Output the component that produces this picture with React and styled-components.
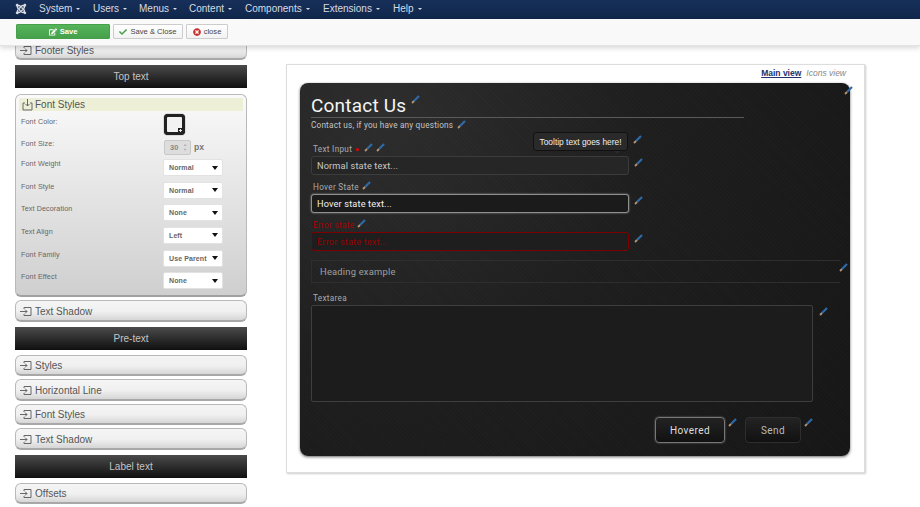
import React from "react";
import styled, { createGlobalStyle } from "styled-components";
import { FaJoomla, FaCheck, FaTimesCircle, FaEdit } from "react-icons/fa";

const Global = createGlobalStyle`
  html, body { margin: 0; padding: 0; background: #fff; }
  body { width: 920px; height: 507px; overflow: hidden; font-family: "Liberation Sans", Arial, sans-serif; }
  * { box-sizing: border-box; }
`;
const Page = styled.div`width: 920px; height: 507px; overflow: hidden; display: flex; flex-direction: column;`;
const Nav = styled.nav`
  height: 19px; flex: none; display: flex; align-items: center; padding: 0 0 2px 15px;
  background: linear-gradient(#17305a, #10274b); color: #d6dbe4; font-size: 10px;
`;
const Logo = styled(FaJoomla)`width: 12px; height: 12px; color: #d8dce2; margin-right: 12px;`;
const NavItem = styled.span`
  width: ${p => p.$w}px; white-space: nowrap;
  &::after { content: ""; display: inline-block; margin-left: 4px; vertical-align: 2px;
    border: 2px solid transparent; border-top-color: #d6dbe4; border-bottom: 0; }
`;
const Toolbar = styled.div`
  height: 27px; flex: none; display: flex; align-items: center; gap: 3px; padding: 0 0 1px 16px;
  background: #f9f9f9; border-bottom: 1px solid #e4e4e4; box-shadow: 0 2px 5px rgba(0,0,0,.16);
  position: relative; z-index: 2;
`;
const Btn = styled.button`
  height: 15px; width: ${p => p.$w}px; padding: 0; display: flex; align-items: center; justify-content: center; gap: 3px;
  font: 7.6px "Liberation Sans", sans-serif; color: ${p => p.$green ? "#fff" : "#444"};
  font-weight: ${p => p.$green ? 700 : 400};
  background: ${p => p.$green ? "linear-gradient(#56b45a,#46a04b)" : "linear-gradient(#fff,#f2f2f2)"};
  border: 1px solid ${p => p.$green ? "#46a04b" : "#ccc"}; border-radius: 1px;
  svg { width: 8px; height: 8px; }
`;
const Main = styled.div`flex: 1; display: flex; padding-left: 15px; gap: 39px; min-height: 0;`;
const Side = styled.aside`width: 232px; flex: none; height: 461px; overflow: hidden; display: flex; flex-direction: column;`;
const Fold = styled.div`
  flex: none; height: ${p => p.$h || 21.5}px; margin-top: ${p => p.$mt ?? 3}px; padding: 2px 0 0 4px;
  display: flex; align-items: center; gap: 3px; font-size: 10px; color: #555;
  border: 1px solid #b9b9b9; border-bottom: 2px solid #a8a8a8; border-radius: 6px;
  background: linear-gradient(#f5f5f5, #f0f0f0 55%, #d6d6d6);
`;
const Bar = styled.div`
  flex: none; height: 23px; margin-top: ${p => p.$mt ?? 5}px; display: flex; align-items: center; justify-content: center;
  font-size: 10px; color: #c4c4c4; background: linear-gradient(#4a4a4a, #101010);
`;
const Open = styled.section`
  flex: none; height: 203px; margin-top: 6px; padding: 3px 3px 0; border: 1px solid #b9b9b9; border-bottom: 2px solid #a0a0a0;
  border-radius: 6px; background: linear-gradient(#fafafa, #cfcfcf);
`;
const OpenHead = styled.div`
  height: 13px; display: flex; align-items: center; gap: 2px; padding-left: 3px; font-size: 10px; color: #555; background: #edf0d6;
`;
const Props = styled.div`
  display: grid; grid-template-columns: 142px 1fr; grid-auto-rows: 22.6px; padding: 3px 0 0 2px;
  font-size: 7.2px; color: #666; letter-spacing: .1px;
`;
const PropLabel = styled.div`padding-top: ${p => p.$pt ?? 2}px;`;
const PropValue = styled.div`display: flex; align-items: flex-start;`;
const Swatch = styled.div`
  width: 21px; height: 21px; margin-left: 1px; border-radius: 4px; border: 3px solid #222; background: #f2f2f2; position: relative; box-shadow: 0 0 1px #000;
  &::after { content: ""; position: absolute; right: -1px; bottom: -1px; width: 5px; height: 5px; background: radial-gradient(circle, #eee 1px, #222 1.4px); }
`;
const Spin = styled.div`
  width: 27px; height: 15px; margin: 3px 0 0 1px; border: 1px solid #c8c8c8; border-radius: 2px; background: #ddd; color: #888;
  display: flex; align-items: center; justify-content: space-between; padding: 0 2px 0 5px; font-size: 7.4px; font-weight: 700;
`;
const Arrows = styled.span`color: #aab; font-size: 4px; line-height: 5px; width: 6px; text-align: center;`;
const Unit = styled.span`font-size: 8.6px; font-weight: 700; color: #777; margin: 5px 0 0 3px;`;
const Sel = styled.div`
  width: 60px; height: 17px; padding: 0 4px 0 5px; background: #fff; border-radius: 2px; color: #666; border: 1px solid #e2e2e2;
  display: flex; align-items: center; justify-content: space-between; font-size: 7px; font-weight: 700; white-space: nowrap; overflow: hidden;
  &::after { content: ""; margin-left: 1px; flex: none; border: 3px solid transparent; border-top: 4px solid #111; border-bottom: 0; }
`;
const Frame = styled.div`
  width: 579px; height: 409px; margin-top: 18px; padding: 0 14px 0 13px; background: #fff; border: 1px solid #ddd; box-shadow: 1px 1px 2px #ccc;
  display: flex; flex-direction: column;
`;
const Views = styled.div`height: 18px; flex: none; display: flex; justify-content: flex-end; align-items: flex-start; gap: 5px; padding: 3px 4px 0 0; font-size: 8.5px;`;
const ViewOn = styled.a`font-weight: 700; color: #23316e; text-decoration: underline;`;
const ViewOff = styled.a`font-style: italic; color: #888;`;
const Dark = styled.div`
  position: relative; height: 373px; width: 550px; padding: 0 10px 0 11px; border-radius: 8px; color: #bbb;
  font-family: Roboto, sans-serif; box-shadow: 0 1px 3px rgba(0,0,0,.6);
  background:
    repeating-linear-gradient(45deg, rgba(255,255,255,.012) 0 1px, transparent 1px 3px),
    radial-gradient(circle at 15% 8%, #2d2d2d, #1e1e1e 45%, #161616 100%);
`;
const TitleRow = styled.div`height: 35px; display: flex; align-items: flex-start; border-bottom: 1px solid #5a5a5a; width: 433px; padding-top: 10px;`;
const Title = styled.h1`margin: 0; font: 400 19px/26px Roboto, sans-serif; letter-spacing: .2px; color: #f4f4f4;`;
const SubRow = styled.div`height: 14px; display: flex; align-items: center; gap: 4px; font-size: 8.2px; letter-spacing: .2px; color: #c4c4c4;`;
const Label = styled.div`
  height: ${p => p.$h}px; padding: 0 0 1.5px 2px; display: flex; align-items: flex-end; gap: 3px; font-size: 8.2px; line-height: 11px; letter-spacing: .3px;
  color: ${p => p.$err ? "#a80000" : "#aaa"};
`;
const Req = styled.span`width: 3px; height: 3px; border-radius: 50%; background: #e00; margin: 0 1px 4px;`;
const InputRow = styled.div`display: flex; align-items: flex-start; gap: 4px; position: relative;`;
const Input = styled.div`
  width: 318px; height: 19px; padding-left: 5px; display: flex; align-items: center; border-radius: 3px; font-size: 9.2px; letter-spacing: .15px;
  background: ${p => p.$state === "hover" ? "#1b1b1b" : p.$state === "error" ? "#1e1e1e" : "#262626"};
  color: ${p => p.$state === "error" ? "#990000" : p.$state === "hover" ? "#f2f2f2" : "#c8c8c8"};
  border: 1px solid ${p => p.$state === "hover" ? "#8f8f8f" : p.$state === "error" ? "#7c0000" : "#3c3c3c"};
  box-shadow: ${p => p.$state === "hover" ? "0 0 2px #999" : "none"};
`;
const Tip = styled.div`
  position: absolute; left: 222px; top: -24px; width: 95px; height: 19px; display: flex; align-items: center; justify-content: center;
  font: 8.4px "Liberation Sans", sans-serif; color: #eee; background: #2a2a2a; border: 1px solid #111; border-radius: 3px; white-space: nowrap;
  &::after { content: ""; position: absolute; left: 80px; bottom: -4px; border: 3px solid transparent; border-top-color: #2a2a2a; border-bottom: 0; }
`;
const TipPen = styled.div`position: absolute; left: 322px; top: -27px;`;
const Heading = styled.div`
  width: 529px; height: 22.5px; margin-top: 9px; padding-left: 8px; display: flex; align-items: center; font-size: 9.4px; letter-spacing: .2px; color: #a0a0a0;
  border: 1px solid #2e2e2e; border-right: 0; position: relative;
`;
const HeadPen = styled.div`position: absolute; right: -8px; top: 2px;`;
const TextRow = styled.div`display: flex; gap: 6px; align-items: flex-start;`;
const TextArea = styled.div`width: 502px; height: 97px; border: 1px solid #3e3e3e; border-radius: 2px; background: #1c1c1c;`;
const Actions = styled.div`display: flex; justify-content: flex-end; align-items: flex-start; padding: 15px 27px 0 0;`;
const Action = styled.button`
  width: ${p => p.$w}px; height: 26px; margin-left: ${p => p.$ml}px; padding: 0; border-radius: 4px; font: 10px Roboto, sans-serif; letter-spacing: .4px;
  color: ${p => p.$hover ? "#ddd" : "#bbb"}; background: linear-gradient(#232323, #111);
  border: 1px solid ${p => p.$hover ? "#777" : "#2e2e2e"}; box-shadow: ${p => p.$hover ? "0 0 2px #777" : "none"};
`;
const CornerPen = styled.div`position: absolute; right: -3px; top: -3px;`;
const PenWrap = styled.span`display: inline-flex; flex: none; margin-top: ${p => p.$mt || 0}px; margin-left: ${p => p.$ml || 0}px; margin-bottom: ${p => p.$mb || 0}px;`;

const Pen = ({ mt, ml, mb }) => (
  <PenWrap $mt={mt} $ml={ml} $mb={mb}>
    <svg width="9" height="9" viewBox="0 0 9 9">
      <path d="M3 6 L8 1" stroke="#2f6aa8" strokeWidth="2.2" />
      <path d="M1 8 L3 6" stroke="#b99575" strokeWidth="1.8" />
    </svg>
  </PenWrap>
);
const InIcon = () => (
  <svg width="12" height="11" viewBox="0 0 12 11" fill="none" stroke="#666" strokeWidth="1">
    <path d="M4 3V1.5h7v8H4V8" /><path d="M0 5.5h7M5 3.5l2 2-2 2" />
  </svg>
);
const DownIcon = () => (
  <svg width="11" height="12" viewBox="0 0 11 12" fill="none" stroke="#666" strokeWidth="1">
    <path d="M3 4H1v7h9V4H8" /><path d="M5.5 0v7M3.5 5l2 2 2-2" />
  </svg>
);

const navItems = [["System", 54], ["Users", 46], ["Menus", 50], ["Content", 56], ["Components", 78], ["Extensions", 70], ["Help", 40]];
const selects = [["Font Weight", "Normal"], ["Font Style", "Normal"], ["Text Decoration", "None"], ["Text Align", "Left"], ["Font Family", "Use Parent"], ["Font Effect", "None"]];

export default function App() {
  return (
    <Page>
      <Global />
      <Nav>
        <Logo />
        {navItems.map(([t, w]) => <NavItem key={t} $w={w}>{t}</NavItem>)}
      </Nav>
      <Toolbar>
        <Btn $green $w={94}><FaEdit />Save</Btn>
        <Btn $w={70}><FaCheck color="#46a04b" />Save &amp; Close</Btn>
        <Btn $w={42}><FaTimesCircle color="#c9302c" />close</Btn>
      </Toolbar>
      <Main>
        <Side>
          <Fold $mt={-7} $h={21}><InIcon />Footer Styles</Fold>
          <Bar>Top text</Bar>
          <Open>
            <OpenHead><DownIcon />Font Styles</OpenHead>
            <Props>
              <PropLabel $pt={3}>Font Color:</PropLabel>
              <PropValue><Swatch /></PropValue>
              <PropLabel>Font Size:</PropLabel>
              <PropValue><Spin>30<Arrows>▲<br />▼</Arrows></Spin><Unit>px</Unit></PropValue>
              {selects.map(([l, v]) => (
                <React.Fragment key={l}>
                  <PropLabel $pt={0}>{l}</PropLabel>
                  <PropValue><Sel>{v}</Sel></PropValue>
                </React.Fragment>
              ))}
            </Props>
          </Open>
          <Fold><InIcon />Text Shadow</Fold>
          <Bar>Pre-text</Bar>
          <Fold $mt={5}><InIcon />Styles</Fold>
          <Fold><InIcon />Horizontal Line</Fold>
          <Fold><InIcon />Font Styles</Fold>
          <Fold><InIcon />Text Shadow</Fold>
          <Bar>Label text</Bar>
          <Fold $mt={5}><InIcon />Offsets</Fold>
        </Side>
        <Frame>
          <Views><ViewOn>Main view</ViewOn><ViewOff>Icons view</ViewOff></Views>
          <Dark>
            <CornerPen><Pen /></CornerPen>
            <TitleRow><Title>Contact Us</Title><Pen mt={2} ml={5} /></TitleRow>
            <SubRow>Contact us, if you have any questions<Pen mb={2} /></SubRow>
            <Label $h={24}>Text Input<Req /><Pen mb={2.5} ml={1} /><Pen mb={2.5} /></Label>
            <InputRow>
              <Tip>Tooltip text goes here!</Tip>
              <TipPen><Pen /></TipPen>
              <Input>Normal state text...</Input><Pen ml={1} mt={2} />
            </InputRow>
            <Label $h={19}>Hover State<Pen mb={2.5} /></Label>
            <InputRow><Input $state="hover">Hover state text...</Input><Pen ml={1} mt={2} /></InputRow>
            <Label $h={19} $err>Error state<Pen mb={2.5} /></Label>
            <InputRow><Input $state="error">Error state text...</Input><Pen ml={1} mt={2} /></InputRow>
            <Heading>Heading example<HeadPen><Pen /></HeadPen></Heading>
            <Label $h={22.5}>Textarea</Label>
            <TextRow><TextArea /><Pen mt={2} /></TextRow>
            <Actions>
              <Action $hover $w={70} $ml={0}>Hovered</Action><Pen ml={3} mt={1} />
              <Action $w={56} $ml={8}>Send</Action><Pen ml={3} mt={1} />
            </Actions>
          </Dark>
        </Frame>
      </Main>
    </Page>
  );
}
